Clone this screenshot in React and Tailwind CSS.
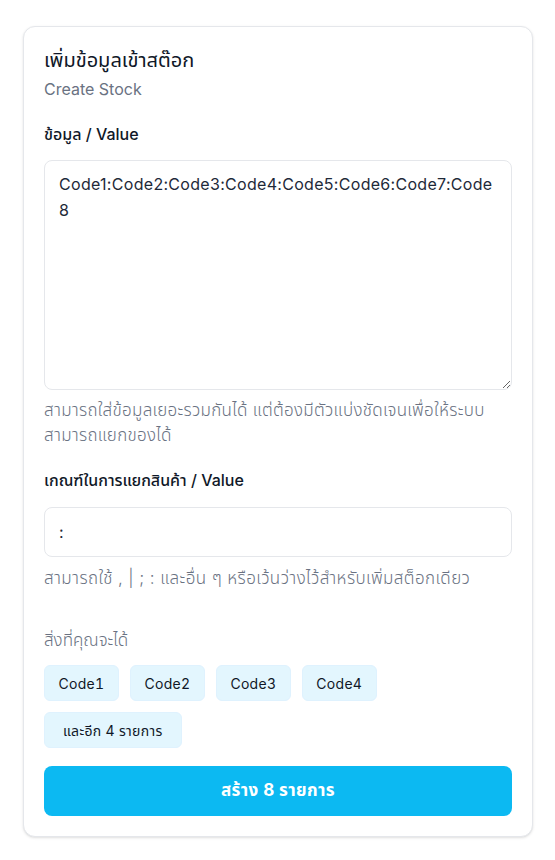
import React from "react";

export default function App() {
  const chips = ["Code1", "Code2", "Code3", "Code4"];
  const chipClass =
    "flex h-[36px] items-center rounded-md border border-sky-100 bg-[#e3f6fe] text-[14px] tracking-[0.3px] tabular-nums text-gray-900";
  return (
    <div className="min-h-[860px] bg-white px-[23px] pt-[26px] font-['Inter','Noto_Sans_Thai','Noto_Sans',sans-serif]">
      <div className="w-[510px] rounded-xl border border-gray-200 bg-white px-5 pt-[18px] pb-5 shadow-sm">
        <h1 className="text-[20px] leading-[31px] font-normal text-gray-900">เพิ่มข้อมูลเข้าสต๊อก</h1>
        <p className="text-[16px] leading-[26px] text-gray-500">Create Stock</p>

        <label className="mt-[19px] block text-[16px] leading-[26px] font-medium text-gray-900">ข้อมูล / Value</label>
        <textarea
          className="mt-[13px] block h-[230px] w-full resize-y rounded-lg border border-gray-200 px-[14px] py-[10px] text-[16px] leading-[26px] tracking-[0.3px] text-gray-800 outline-none"
          defaultValue="Code1:Code2:Code3:Code4:Code5:Code6:Code7:Code8"
        />
        <p className="mt-[8px] text-[17px] leading-[25px] font-light tracking-[0.3px] text-gray-500">
          สามารถใส่ข้อมูลเยอะรวมกันได้ แต่ต้องมีตัวแบ่งชัดเจนเพื่อให้ระบบสามารถแยกของได้
        </p>

        <label className="mt-[19px] block text-[16px] leading-[26px] font-medium text-gray-900">เกณฑ์ในการแยกสินค้า / Value</label>
        <input
          className="mt-[14px] block h-[50px] w-full rounded-lg border border-gray-200 px-[14px] text-[16px] text-gray-800 outline-none"
          defaultValue=":"
        />
        <p className="mt-[8px] text-[17px] leading-[26px] font-light tracking-[0.4px] text-gray-500">
          สามารถใช้ , | ; : และอื่น ๆ หรือเว้นว่างไว้สำหรับเพิ่มสต็อกเดียว
        </p>

        <p className="mt-[36px] text-[17px] leading-[26px] font-light text-gray-500">สิ่งที่คุณจะได้</p>
        <div className="mt-[12px] flex w-[360px] flex-wrap gap-x-[11px] gap-y-[11px]">
          {chips.map((c) => (
            <span key={c} className={chipClass + " px-[13.5px]"}>
              {c}
            </span>
          ))}
          <span className={chipClass + " px-[18px]"}>และอีก 4 รายการ</span>
        </div>

        <button className="mt-[18px] flex h-[50px] w-full items-center justify-center rounded-lg bg-[#0cb9f2] text-[17px] font-bold tracking-[0.4px] text-white">
          สร้าง 8 รายการ
        </button>
      </div>
    </div>
  );
}
